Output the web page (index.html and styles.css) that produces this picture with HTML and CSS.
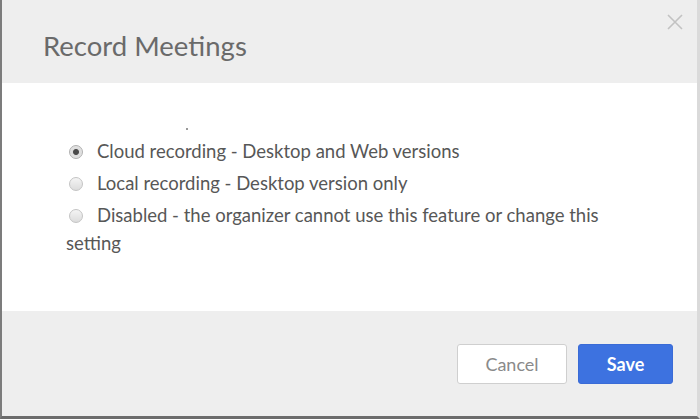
FILE: index.html
```html
<!DOCTYPE html>
<html>
<head>
<meta charset="utf-8">
<link rel="stylesheet" href="styles.css">
</head>
<body>
<div class="modal">
  <header class="modal-header">
    <h1 class="modal-title">Record Meetings</h1>
    <button class="close" aria-label="Close">
      <svg width="16" height="16" viewBox="0 0 16 16"><path d="M1 1L15 15M15 1L1 15" stroke="#c2c2c2" stroke-width="1.6" fill="none"/></svg>
    </button>
  </header>
  <section class="modal-body">
    <span class="speck"></span>
    <ul class="options">
      <li class="option"><span class="radio checked"></span>Cloud recording - Desktop and Web versions</li>
      <li class="option"><span class="radio"></span>Local recording - Desktop version only</li>
      <li class="option"><span class="radio"></span>Disabled - the organizer cannot use this feature or change this setting</li>
    </ul>
  </section>
  <footer class="modal-footer">
    <button class="btn btn-cancel">Cancel</button>
    <button class="btn btn-save">Save</button>
  </footer>
</div>
</body>
</html>
```
FILE: styles.css
```css
html, body {
  margin: 0;
  padding: 0;
  background: #ffffff;
}
body {
  width: 700px;
  height: 419px;
  overflow: hidden;
  font-family: Lato, "Open Sans", sans-serif;
}
.modal {
  width: 700px;
  height: 419px;
  box-sizing: border-box;
  border-left: 2px solid #7c7c7c;
  border-bottom: 3px solid #6c6c6c;
  border-right: 3px solid #dadada;
  display: flex;
  flex-direction: column;
}
.modal-header {
  height: 83px;
  flex: none;
  background: #eeeeee;
  position: relative;
  display: flex;
  align-items: flex-start;
}
.modal-title {
  margin: 28px 0 0 41px;
  font-size: 27.5px;
  font-weight: 400;
  color: #6a6a6a;
  line-height: 36px;
}
.close {
  position: absolute;
  right: 14px;
  top: 14px;
  width: 16px;
  height: 16px;
  padding: 0;
  border: 0;
  background: none;
}
.close svg { display: block; }
.modal-body {
  height: 228px;
  flex: none;
  background: #ffffff;
  position: relative;
  box-sizing: border-box;
  padding: 54px 80px 0 64px;
}
.speck {
  position: absolute;
  left: 184px;
  top: 45px;
  width: 2px;
  height: 2px;
  background: #777;
  border-radius: 1px;
}
.options {
  list-style: none;
  margin: 0;
  padding: 0;
}
.option {
  font-size: 18.5px;
  line-height: 28px;
  color: #575757;
  margin-bottom: 4px;
}
.radio {
  display: inline-block;
  width: 14px;
  height: 14px;
  box-sizing: border-box;
  border-radius: 50%;
  border: 1px solid #c4c4c4;
  background: linear-gradient(#f4f4f4, #dcdcdc);
  vertical-align: -1px;
  margin: 0 14px 0 3px;
  position: relative;
}
.radio.checked {
  border-color: #b0b0b0;
  background: radial-gradient(circle, #4a4a4a 0, #4a4a4a 2.5px, #dcdcdc 3.5px, #eaeaea 100%);
}
.modal-footer {
  flex: 1;
  background: #eeeeee;
  display: flex;
  justify-content: flex-end;
  align-items: flex-start;
  padding: 33px 24px 0 0;
  gap: 11px;
}
.btn {
  height: 40px;
  font-family: Lato, "Open Sans", sans-serif;
  font-size: 18px;
  border-radius: 3px;
  cursor: pointer;
}
.btn-cancel {
  width: 110px;
  background: #ffffff;
  border: 1px solid #cfcfcf;
  color: #8a8a8a;
}
.btn-save {
  width: 95px;
  background: #3d72e0;
  border: 1px solid #3a6bd6;
  color: #ffffff;
  font-weight: 700;
}
```
